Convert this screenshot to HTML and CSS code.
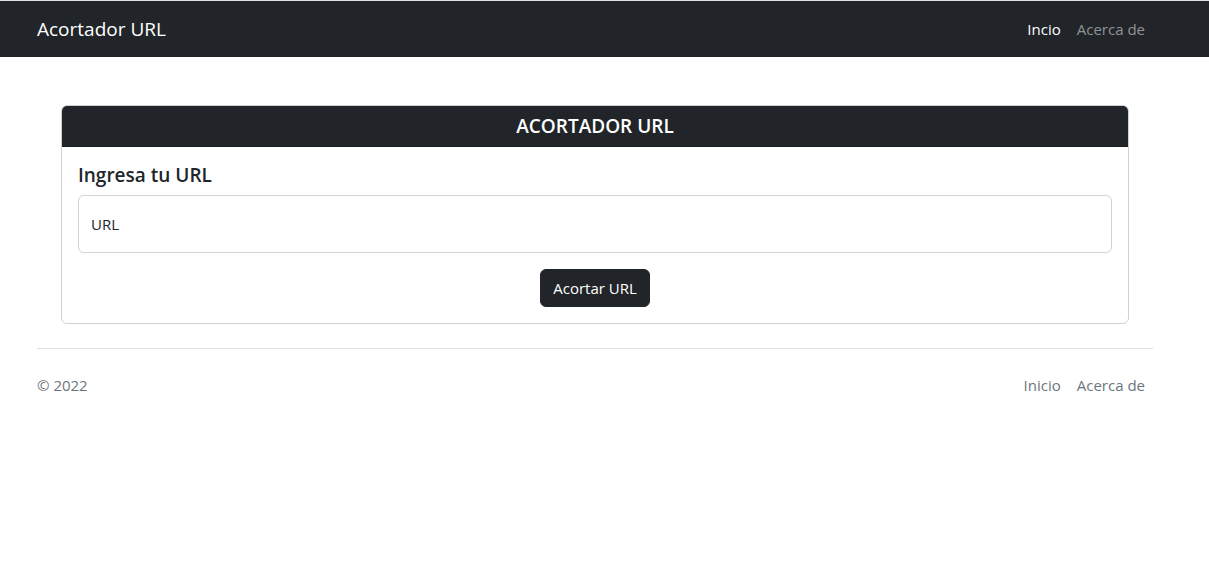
FILE: index.html
```html
<!DOCTYPE html>
<html lang="es">
<head>
  <meta charset="utf-8">
  <meta name="viewport" content="width=device-width, initial-scale=1">
  <title>Acortador URL</title>
  <link rel="stylesheet" href="styles.css">
</head>
<body>
  <header class="navbar">
    <div class="container bar">
      <a class="brand" href="#">Acortador URL</a>
      <nav class="links">
        <a class="link active" href="#">Incio</a>
        <a class="link" href="#">Acerca de</a>
      </nav>
    </div>
  </header>
  <main class="container main">
    <section class="card">
      <h1 class="card-header">ACORTADOR URL</h1>
      <form class="card-body">
        <label class="label" for="url">Ingresa tu URL</label>
        <input class="input" id="url" type="text" placeholder="URL">
        <button class="button" type="button">Acortar URL</button>
      </form>
    </section>
  </main>
  <div class="container">
    <footer class="footer">
      <p class="copy">© 2022</p>
      <nav class="links">
        <a class="link" href="#">Inicio</a>
        <a class="link" href="#">Acerca de</a>
      </nav>
    </footer>
  </div>
</body>
</html>
```
FILE: styles.css
```css
*, *::before, *::after {
  box-sizing: border-box;
}

body {
  margin: 0;
  padding-right: 19px;
  background: #fff;
  color: #212529;
  font-family: "Segoe UI", "Open Sans", "Noto Sans", sans-serif;
  font-size: 15px;
  line-height: 24px;
}

.container {
  width: 100%;
  max-width: 1140px;
  margin: 0 auto;
  padding: 0 12px;
}

.navbar {
  margin-right: -19px;
  padding: 8px 19px 8px 0;
  border-top: 1px solid #dee2e6;
  background: #212529;
}

.bar {
  display: flex;
  align-items: center;
  justify-content: space-between;
}

.brand {
  padding: 5px 0;
  color: #fff;
  font-size: 19px;
  line-height: 30px;
  text-decoration: none;
}

.links {
  display: flex;
}

.link {
  padding: 8px;
  color: #6c757d;
  text-decoration: none;
}

.navbar .link {
  color: #909294;
}

.navbar .link.active {
  color: #fff;
}

.main {
  padding: 48px 36px 0;
}

.card {
  border: 1px solid #d0d1d2;
  border-radius: 6px;
}

.card-header {
  margin: 0;
  padding: 8px 16px;
  border-bottom: 1px solid #1c1f23;
  border-radius: 5px 5px 0 0;
  background: #212529;
  color: #fff;
  font-size: 19px;
  font-weight: 600;
  line-height: 24px;
  text-align: center;
}

.card-body {
  display: flex;
  flex-direction: column;
  padding: 16px;
}

.label {
  margin-bottom: 8px;
  font-size: 19px;
  font-weight: 600;
}

.input {
  height: 58px;
  margin-bottom: 16px;
  padding: 16px 12px;
  border: 1px solid #ced4da;
  border-radius: 6px;
  background: #fff;
  color: #212529;
  font: inherit;
}

.input::placeholder {
  color: #212529;
  opacity: 1;
}

.button {
  align-self: center;
  padding: 6px 12px;
  border: 1px solid #212529;
  border-radius: 6px;
  background: #212529;
  color: #fff;
  font: inherit;
}

.footer {
  display: flex;
  align-items: center;
  justify-content: space-between;
  margin: 24px 0;
  padding: 16px 0;
  border-top: 1px solid #dee2e6;
  color: #6c757d;
}

.copy {
  margin: 0;
}
```
